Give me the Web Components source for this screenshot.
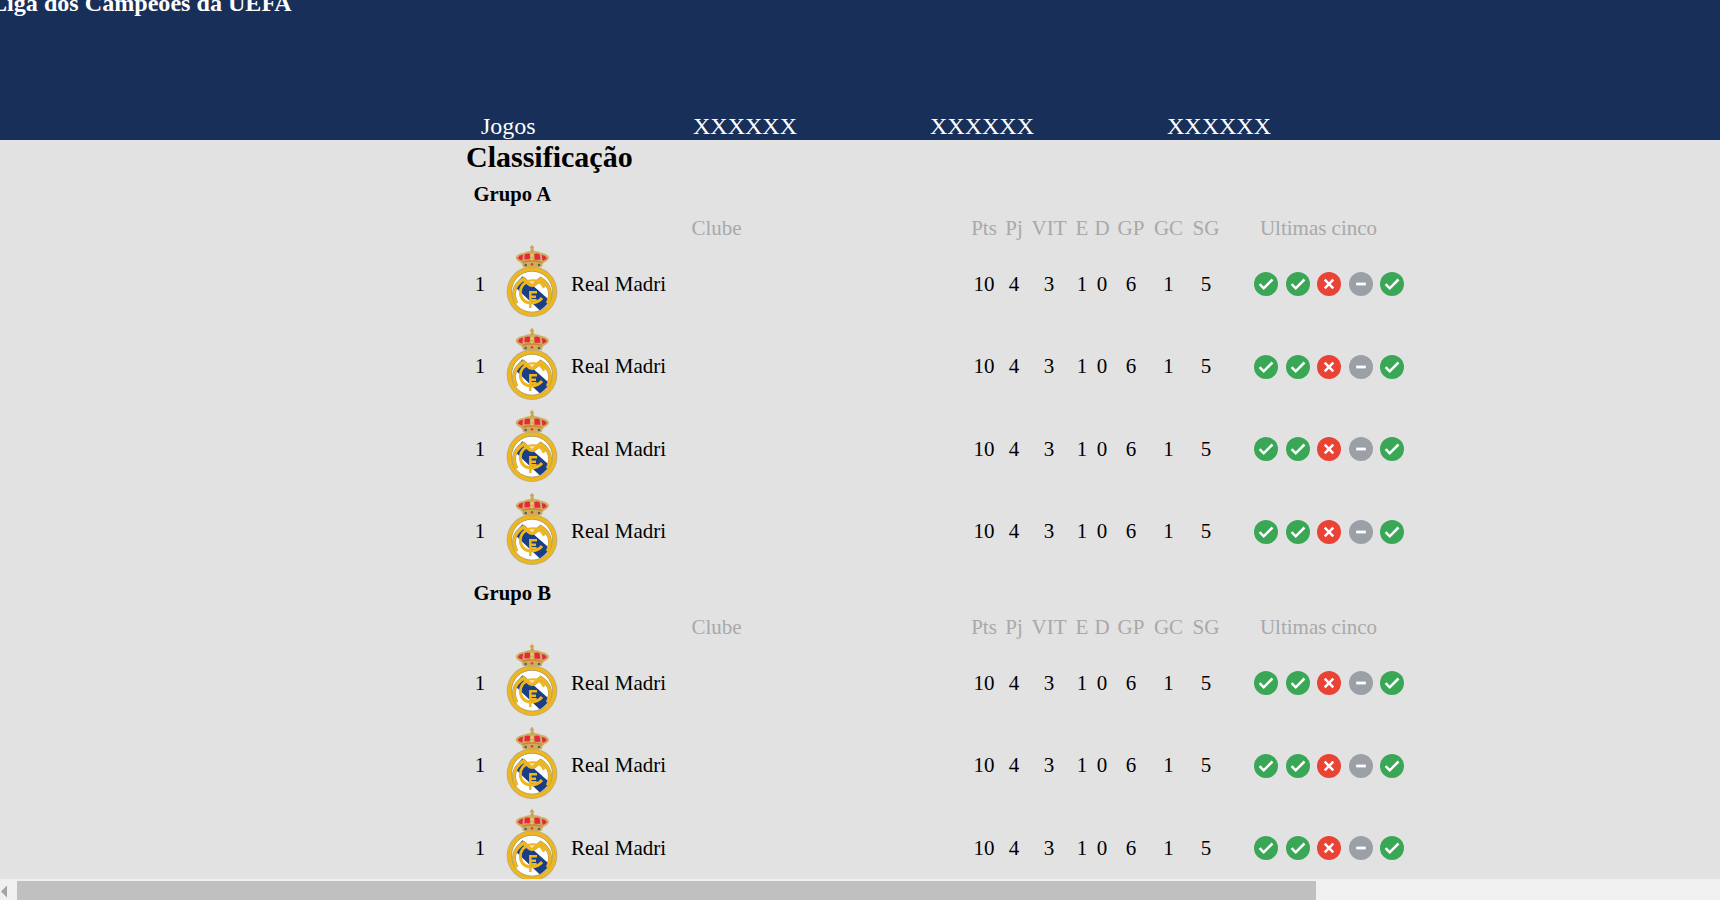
<!DOCTYPE html>
<html lang="pt-BR">
<head>
<meta charset="utf-8">
<title>Liga dos Campeões da UEFA</title>
<style>
html,body{margin:0;height:100%;overflow:hidden}
body{font-family:"Liberation Serif","Times New Roman",serif;font-size:21px;color:#000;background:#e2e2e2}
</style>
</head>
<body>
<league-page></league-page>
<script>
function define(name, html){
  const t=document.createElement('template');
  t.innerHTML=html;
  customElements.define(name, class extends HTMLElement{
    constructor(){
      super();
      this.attachShadow({mode:'open'}).append(t.content.cloneNode(true));
    }
  });
}

define('form-badge', `<style>
:host{display:block;width:24px;height:24px}
svg{display:none;width:24px;height:24px}
:host([result=win]) .win,:host([result=loss]) .loss,:host([result=draw]) .draw{display:block}
</style>
<svg class="win" viewBox="0 0 24 24"><circle cx="12" cy="12" r="12" fill="#3aa757"/><path d="M5.6 12.2l4.1 4.1 8.8-8.8" fill="none" stroke="#fff" stroke-width="2.5"/></svg>
<svg class="loss" viewBox="0 0 24 24"><circle cx="12" cy="12" r="12" fill="#ea4335"/><path d="M7.7 7.7l8.6 8.6M16.3 7.7l-8.6 8.6" fill="none" stroke="#fff" stroke-width="2.5"/></svg>
<svg class="draw" viewBox="0 0 24 24"><circle cx="12" cy="12" r="12" fill="#9aa0a6"/><path d="M7.2 12h9.6" stroke="#fff" stroke-width="2.8"/></svg>`);

define('club-crest', `<style>
:host{display:block;width:75px;height:90px}
svg{display:block;width:75px;height:90px}
</style>
<svg viewBox="0 0 225 270">
<defs><clipPath id="c"><circle cx="111" cy="170" r="60"/></clipPath></defs>
<circle cx="111" cy="170" r="76" fill="#bfae7c"/>
<circle cx="111" cy="170" r="73" fill="#efb71b"/>
<circle cx="111" cy="170" r="61.5" fill="#fff" stroke="#b3a06a" stroke-width="3"/>
<path clip-path="url(#c)" d="M58 154L82 124 166 198 136 228Z" fill="#1b3f86"/>
<path d="M64 205C50 176 58 149 86 132L98 143Q111 158 124 143L137 132C164 149 172 176 158 205" fill="none" stroke="#a8986a" stroke-width="12"/>
<g fill="none" stroke="#efb71b" stroke-width="9">
<path d="M64 206C50 176 58 149 86 132L98 143Q111 158 124 143L137 132C164 149 172 176 158 206"/>
<path d="M148 158L141 147Q130 134 104 138C66 147 68 198 101 203C120 206 132 200 141 189"/>
<path d="M106 219V172H126M108 185H123M106 196H125" stroke-width="7.5"/>
</g>
<path d="M102 139h18l-9 9z" fill="#f8e6b0"/>
<path d="M83 95Q83 84 72 80Q58 72 64 63Q72 54 86 53Q97 47 105 49L109 42H115L119 49Q129 47 138 53Q152 54 160 63Q166 72 152 80Q141 84 141 95Q111 104 83 95Z" fill="#cdae5c"/>
<path d="M69 71Q70 61 84 59L82 77ZM89 58Q98 54 106 57L104 73H88ZM118 57Q126 54 134 58L136 74H119ZM140 60Q154 62 155 71L143 78Z" fill="#e52742"/>
<path d="M83 79Q111 70 141 80L139 84Q111 77 84 84Z" fill="#d98033"/>
<circle cx="92" cy="90" r="4" fill="#566268"/><circle cx="132" cy="90" r="4" fill="#566268"/><circle cx="111" cy="88" r="4" fill="#d64735"/>
<circle cx="111" cy="61" r="5" fill="#ebc767"/><circle cx="111" cy="73" r="3.5" fill="#ebc767"/>
<path d="M111 31V52M105 38H117" stroke="#c9a44c" stroke-width="5" fill="none"/>
</svg>`);

const COLS='28px 473px 34px 26px 44px 22px 18px 40px 35px 40px 206px';

define('standings-head', `<style>
:host{display:grid;grid-template-columns:${COLS};height:37px;align-items:center;text-align:center;color:#a9a9a9;white-space:nowrap}
.club{grid-column:1/3}
.last{padding-right:21px}
</style>
<span class="club">Clube</span><span>Pts</span><span>Pj</span><span>VIT</span><span>E</span><span>D</span><span>GP</span><span>GC</span><span>SG</span><span class="last">Ultimas cinco</span>`);

define('club-row', `<style>
:host{display:grid;grid-template-columns:${COLS};grid-template-rows:82.5px;height:82.5px;align-items:center;text-align:center;white-space:nowrap}
.club{display:flex;align-items:center;text-align:left}
club-crest{margin:-8px 1px 0 1px}
.form{display:flex;justify-content:center;gap:7.5px}
</style>
<span>1</span>
<div class="club"><club-crest></club-crest><slot></slot></div>
<span>10</span><span>4</span><span>3</span><span>1</span><span>0</span><span>6</span><span>1</span><span>5</span>
<div class="form"><form-badge result="win"></form-badge><form-badge result="win"></form-badge><form-badge result="loss"></form-badge><form-badge result="draw"></form-badge><form-badge result="win"></form-badge></div>`);

define('group-table', `<style>
:host{display:block;height:399px}
h3{margin:0;padding-left:7.5px;height:32px;line-height:32px;font-size:20.7px}
.rows{margin-top:-4px}
</style>
<h3><slot></slot></h3>
<standings-head></standings-head>
<div class="rows"><club-row>Real Madri</club-row><club-row>Real Madri</club-row><club-row>Real Madri</club-row><club-row>Real Madri</club-row></div>`);

define('site-header', `<style>
:host{display:flex;flex-direction:column;justify-content:space-between;height:140px;background:#182f59;color:#fff;font-size:24px;overflow:hidden;white-space:nowrap}
h1{margin:-11px 0 0 -9px;font-size:24.1px;line-height:28px}
nav{display:grid;grid-template-columns:212px 237px 237px auto;padding-left:481px;line-height:28px}
</style>
<h1>Liga dos Campeões da UEFA</h1>
<nav><span>Jogos</span><span>XXXXXX</span><span>XXXXXX</span><span>XXXXXX</span></nav>`);

define('scroll-strip', `<style>
:host{display:flex;height:21px;background:#f0f0f0;box-sizing:border-box;padding-top:2px}
svg{width:17px;height:19px;flex:none}
div{width:1299px;background:#c0c0c0}
</style>
<svg viewBox="0 0 17 19"><path d="M1 10.5L7 4.5V16.5Z" fill="#a3a3a3"/></svg><div></div>`);

define('league-page', `<style>
:host{display:flex;flex-direction:column;height:900px;width:1720px;overflow:hidden}
site-header,scroll-strip{flex:none}
main{flex:1;min-height:0;overflow:hidden;padding-left:466px}
h2{margin:0;font-size:30px;line-height:34px;height:38px}
</style>
<site-header></site-header>
<main><h2>Classificação</h2><group-table>Grupo A</group-table><group-table>Grupo B</group-table></main>
<scroll-strip></scroll-strip>`);
</script>
</body>
</html>
